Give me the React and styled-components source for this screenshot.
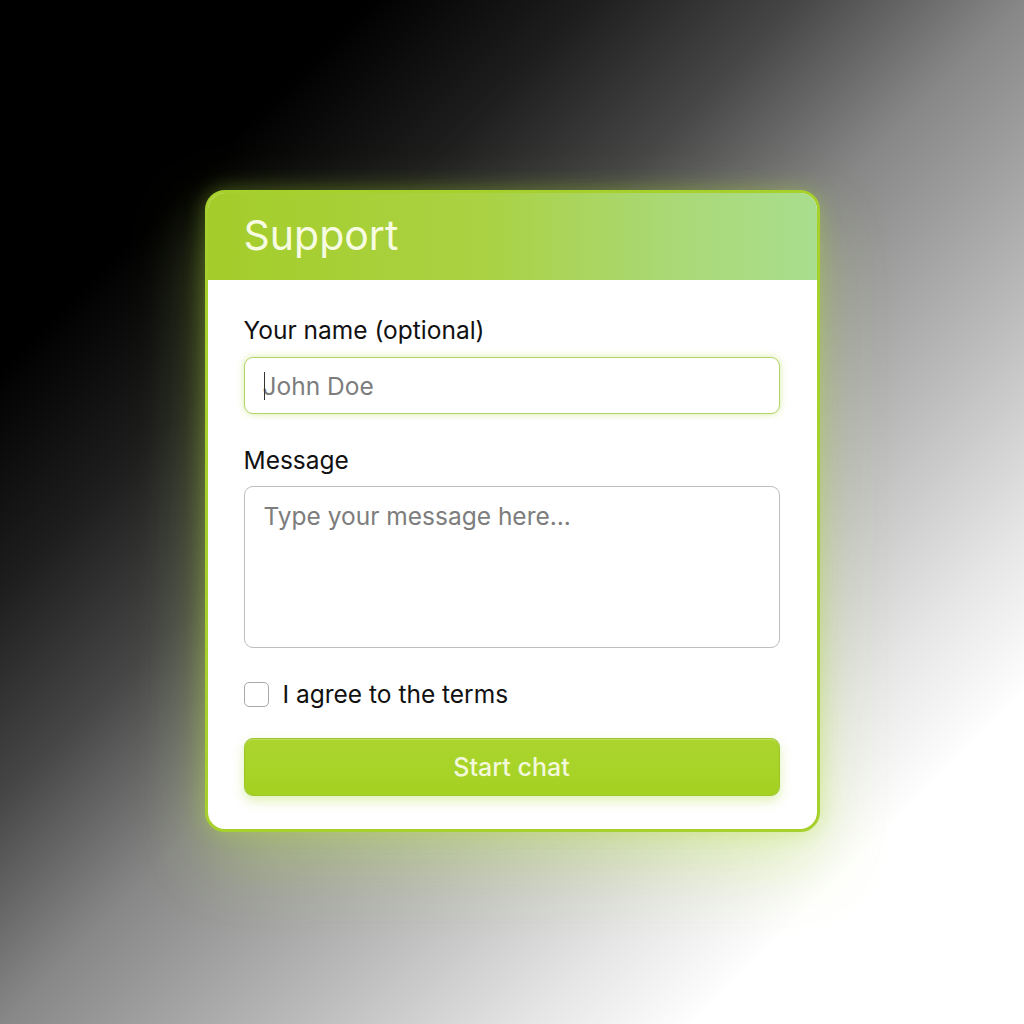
import React from "react";
import styled, { createGlobalStyle } from "styled-components";

const GlobalStyle = createGlobalStyle`
  html, body {
    margin: 0;
    padding: 0;
    height: 100%;
  }
  body {
    font-family: Inter, "Noto Sans", sans-serif;
  }
  #root {
    height: 100%;
  }
`;

const Page = styled.div`
  width: 100%;
  min-height: 100vh;
  display: flex;
  align-items: center;
  justify-content: center;
  background: linear-gradient(
    135deg,
    #000 18%,
    #1e1e1e 29%,
    #464646 39%,
    #878787 50%,
    #b9b9b9 64%,
    #e6e6e6 76%,
    #fff 84%
  );
`;

const Card = styled.div`
  width: 609px;
  margin-top: -2px;
  border: 3px solid #a7d02c;
  border-radius: 20px;
  background: #fff;
  overflow: hidden;
  box-shadow: 0 30px 70px rgba(200, 245, 80, 0.35), 0 0 20px rgba(170, 220, 50, 0.35);
`;

const Header = styled.div`
  height: 87px;
  display: flex;
  align-items: center;
  padding: 0 36px;
  background: linear-gradient(90deg, #a4cd2a 0%, #aad243 45%, #aad874 75%, #a9de8e 100%);
`;

const Title = styled.h1`
  margin: 0;
  margin-top: -4px;
  font-size: 41px;
  font-weight: 400;
  color: #f6fbe2;
`;

const Body = styled.div`
  padding: 36px 37px 33px 36px;
  display: flex;
  flex-direction: column;
`;

const Label = styled.label`
  font-size: 24.5px;
  line-height: 28px;
  color: #111;
  margin-bottom: ${(p) => p.$gap}px;
`;

const Field = styled.div`
  position: relative;
  margin-bottom: ${(p) => p.$after}px;
`;

const Input = styled.input`
  box-sizing: border-box;
  width: 100%;
  height: 57px;
  padding: 0 18px;
  border: 1.5px solid #b3d46a;
  border-radius: 9px;
  font-family: inherit;
  font-size: 24.5px;
  color: #222;
  outline: none;
  box-shadow: 0 0 7px rgba(170, 215, 50, 0.45);
  &::placeholder {
    color: #7d7d7d;
  }
`;

const Caret = styled.span`
  position: absolute;
  left: 20px;
  top: 15px;
  width: 1.5px;
  height: 28px;
  background: #333;
`;

const TextArea = styled.textarea`
  display: block;
  box-sizing: border-box;
  width: 100%;
  height: 162px;
  padding: 15px 19px;
  border: 1.5px solid #bdbdbd;
  border-radius: 9px;
  font-family: inherit;
  font-size: 24.5px;
  line-height: 28px;
  resize: none;
  outline: none;
  &::placeholder {
    color: #7d7d7d;
  }
`;

const CheckRow = styled.label`
  display: flex;
  align-items: center;
  gap: 14px;
  height: 25px;
  font-size: 24.5px;
  line-height: 25px;
  color: #111;
  margin-bottom: 31px;
`;

const Box = styled.span`
  box-sizing: border-box;
  width: 25px;
  height: 25px;
  border: 1.5px solid #a9a9a9;
  border-radius: 5px;
  background: #fff;
`;

const Button = styled.button`
  height: 58px;
  border: 1px solid #9cc52a;
  border-radius: 9px;
  background: linear-gradient(180deg, #abd52e 0%, #a5d122 100%);
  color: #f2f9da;
  font-family: inherit;
  font-size: 25px;
  font-weight: 500;
  box-shadow: 0 5px 12px rgba(170, 215, 50, 0.35), inset 0 1px 0 rgba(255, 255, 255, 0.25);
  cursor: pointer;
`;

export default function App() {
  return (
    <>
      <GlobalStyle />
      <Page>
        <Card>
          <Header>
            <Title>Support</Title>
          </Header>
          <Body>
            <Label $gap={13}>Your name (optional)</Label>
            <Field $after={32}>
              <Input placeholder="John Doe" />
              <Caret />
            </Field>
            <Label $gap={12}>Message</Label>
            <Field $after={34}>
              <TextArea placeholder="Type your message here..." />
            </Field>
            <CheckRow>
              <Box />
              I agree to the terms
            </CheckRow>
            <Button>Start chat</Button>
          </Body>
        </Card>
      </Page>
    </>
  );
}
